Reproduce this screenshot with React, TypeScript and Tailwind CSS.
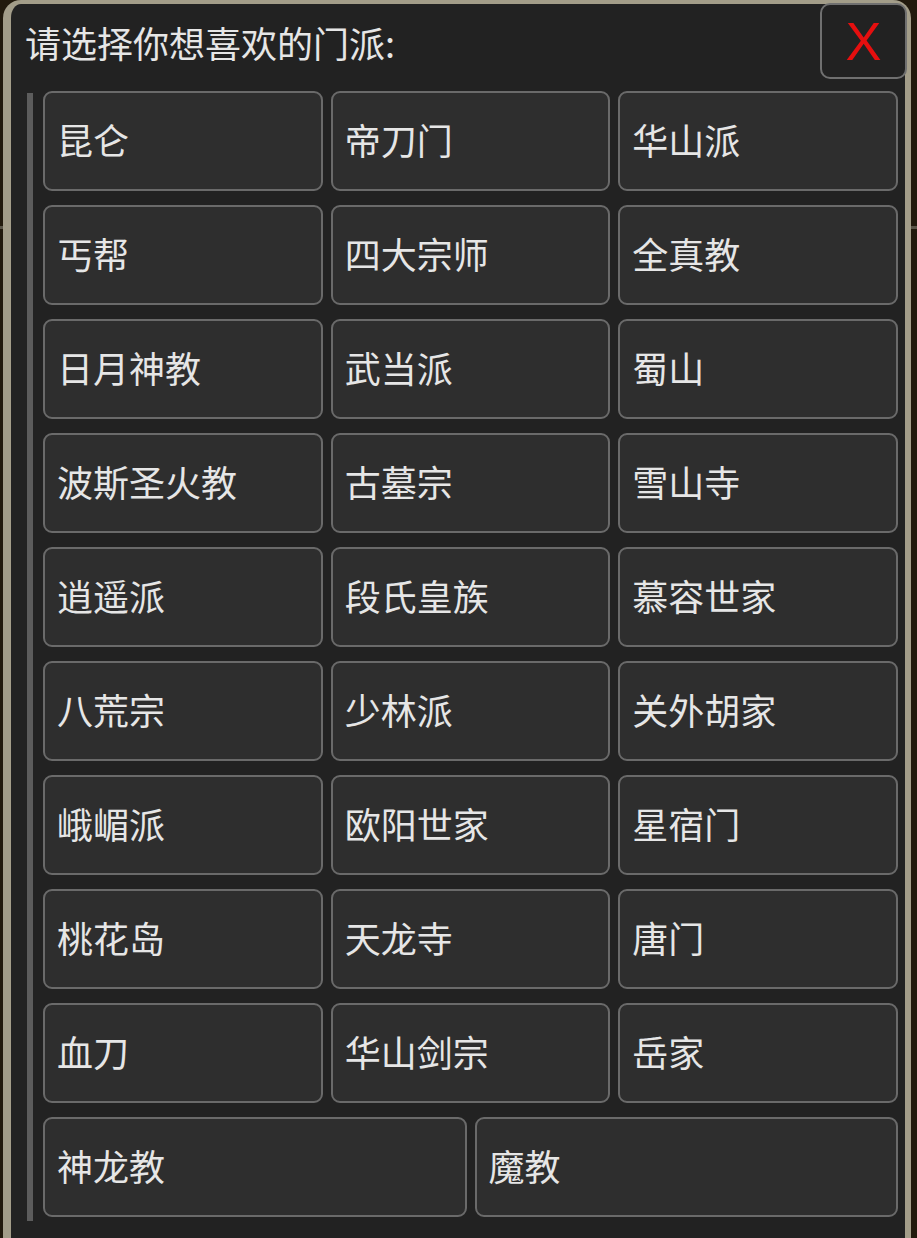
const rows: string[][] = [
  ['昆仑', '帝刀门', '华山派'],
  ['丐帮', '四大宗师', '全真教'],
  ['日月神教', '武当派', '蜀山'],
  ['波斯圣火教', '古墓宗', '雪山寺'],
  ['逍遥派', '段氏皇族', '慕容世家'],
  ['八荒宗', '少林派', '关外胡家'],
  ['峨嵋派', '欧阳世家', '星宿门'],
  ['桃花岛', '天龙寺', '唐门'],
  ['血刀', '华山剑宗', '岳家'],
];

const lastRow = ['神龙教', '魔教'];

function SectButton({ name }: { name: string }) {
  return (
    <button className="h-[100px] flex items-center pl-[12px] pb-[4px] bg-[#2e2e2e] border-2 border-[#6a6a6a] rounded-[9px] text-[36px] text-[#e6e6e6] text-left">
      {name}
    </button>
  );
}

export default function App() {
  return (
    <div
      className="w-[917px] h-[1238px] bg-[#221a0d] overflow-hidden relative"
      style={{ fontFamily: '"Noto Sans CJK SC", "Noto Sans", sans-serif' }}
    >
      <div className="absolute left-0 right-0 top-[226px] h-[3px] bg-[#5a5548]" />
      <div className="relative ml-[3px] w-[908px] h-[1260px] border-l-[8px] border-r-[6px] border-t-[4px] border-[#a39d89] rounded-t-[18px] bg-[#222222] pl-[16px] pr-[1px]">
        <div className="h-[87px] pt-[18px] leading-[40px] text-[36px] text-[#e6e6e6] -ml-[2px]">请选择你想喜欢的门派:</div>

        {/* close */}
        <div className="absolute right-[-2px] top-[-1px] w-[87px] h-[76px] border-2 border-[#707070] rounded-[10px] bg-[#222222] flex items-center justify-center">
          <span className="text-[#e50f0f] text-[54px] leading-none" style={{ fontFamily: '"Liberation Sans", Arial, sans-serif' }}>X</span>
        </div>

        <div className="flex">
          <div className="w-[6px] h-[1128px] mt-[2px] bg-[#5c5c5c]" />
          <div className="ml-[10px] w-[855px] flex flex-col gap-[14px]">
            {rows.map((r, i) => (
              <div key={i} className="grid grid-cols-3 gap-[8px]">
                {r.map(n => <SectButton key={n} name={n} />)}
              </div>
            ))}
            <div className="grid grid-cols-2 gap-[8px]">
              {lastRow.map(n => <SectButton key={n} name={n} />)}
            </div>
          </div>
        </div>
      </div>
    </div>
  );
}
